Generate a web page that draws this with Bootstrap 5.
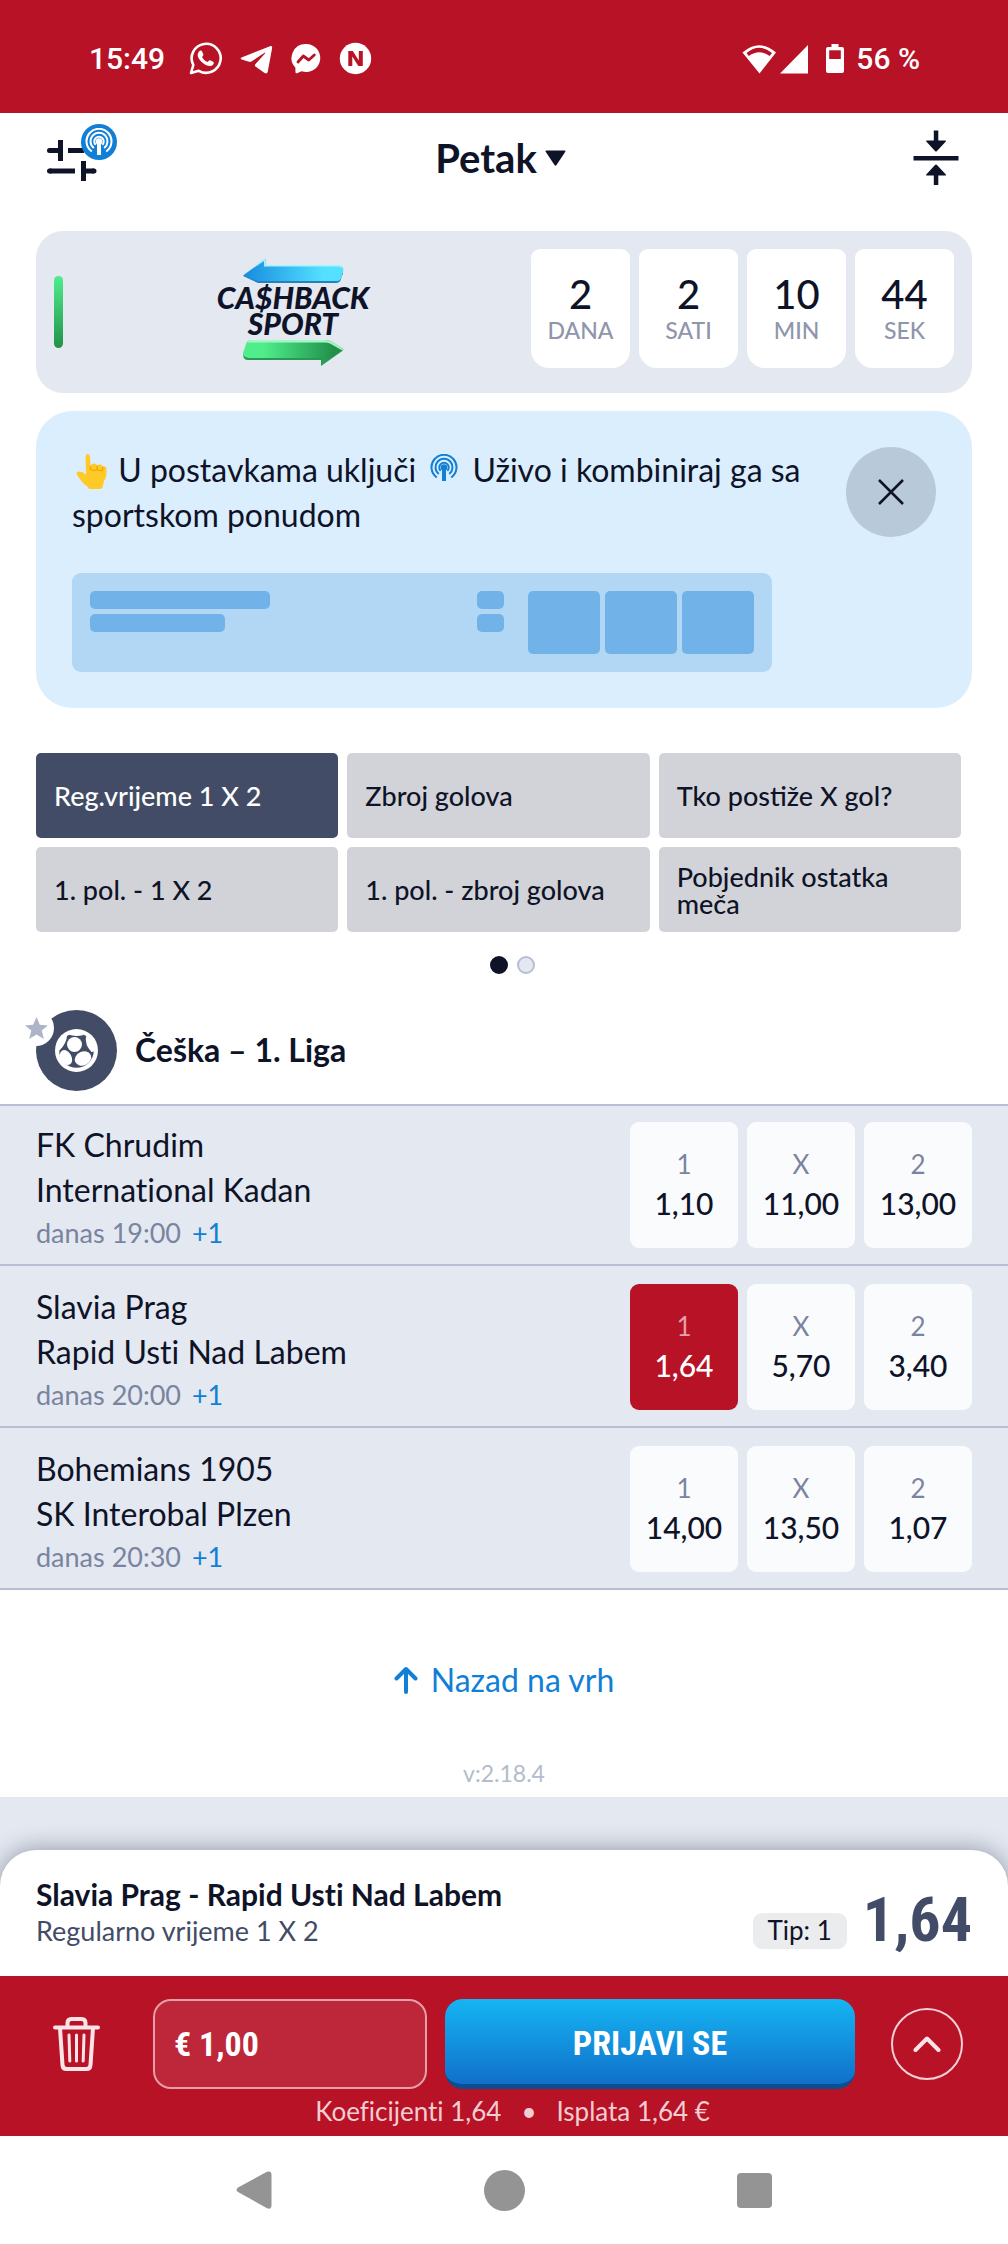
<!DOCTYPE html>
<html lang="hr">
<head>
<meta charset="utf-8">
<meta name="viewport" content="width=device-width, initial-scale=1">
<title>Petak – sportska ponuda</title>
<link href="https://cdn.jsdelivr.net/npm/bootstrap@5.3.0/dist/css/bootstrap.min.css" rel="stylesheet">
<style>
:root{--ink:#0f1328;--red:#b81226;--mist:#e3e8f1;--slate:#434c66;--muted:#7a84a0;--sky:#127fd6;--rule:#b7bed3}
body{font-family:Lato,"Open Sans",sans-serif;color:var(--ink);background:#fff;font-size:32px;line-height:45px;font-variant-ligatures:none}
svg{display:block;flex:none}
button{color:inherit}
.px-edge{padding-left:36px;padding-right:36px}
.size-xl{font-size:40px;line-height:46px}
.size-sm{font-size:27px;line-height:27px}
.size-xs{font-size:23px;line-height:26px}
.narrow{font-family:"Liberation Sans Narrow","Roboto Condensed",Roboto,sans-serif;font-weight:700}
.bare{background:none;border:0;padding:0}

.statusbar{background:var(--red);color:#fff;padding:36px 88px 32px 89px;font-family:Roboto,sans-serif;font-weight:500;font-size:30px}
.statusbar .apps{gap:18px;margin-left:24px}
.topbar{padding:13px 45px 41px 46px}
.topbar .side{width:54px}
.live-mark{position:absolute;top:2px;right:-13px;color:#fff}

.promo{background:var(--mist);border-radius:27px;padding:18px;min-height:162px}
.promo .accent{width:9px;height:72px;border-radius:5px;background:linear-gradient(#50ed8c,#21914a)}
.promo-logo{font-size:30px;font-weight:900;font-style:italic;line-height:26px;text-align:center}
.tick{width:99px;height:119px;background:#fff;border-radius:9px 9px 18px 18px;padding-top:22px;font-weight:500}
.tick .unit{color:#8f96ab}
.g9{gap:9px}

.hint{background:#dbeefe;border-radius:36px;padding:36px;margin-top:18px}
.hint p{margin:0;max-width:750px}
.hint p svg{display:inline-block;vertical-align:0;margin:0 6px}
.hint p .emoji{vertical-align:-8px;margin:0}
.dismiss{width:90px;height:90px}
.dismiss.rounded-circle{background:#b8c9da}
.skeleton{background:#b1d7f5;border-radius:9px;padding:18px;margin-top:36px;width:700px;max-width:100%}
.skeleton span{display:block;height:18px;background:#71b3e8;border-radius:5px}
.skeleton .w-a{width:180px}.skeleton .w-b{width:135px}.skeleton .w-c{width:27px}
.skeleton .sq{width:72px;height:63px}
.g5{gap:5px}

.markets{display:grid;grid-template-columns:repeat(3,1fr);gap:9px;padding:45px 47px 0 36px}
.markets button{border:0;border-radius:5px;background:#d2d3d9;min-height:85px;padding:15px 18px;text-align:left;font-weight:500}
.markets button.on{background:var(--slate);color:#fff}
.dots{gap:9px;padding-top:24px}
.dots span{width:18px;height:18px;border-radius:50%;background:var(--mist);border:2px solid var(--rule)}
.dots .on{background:var(--ink);border-color:var(--ink)}

.league{padding-top:36px;padding-bottom:13px;gap:18px}
.league h1{font-size:32px}
.crest{width:81px;height:81px;background:var(--slate)}
.crest .fav{position:absolute;left:-18px;top:0;width:36px;height:36px;border-radius:50%;background:#fff}
.match{background:var(--mist);border-bottom:2px solid var(--rule);padding-top:18px;padding-bottom:10px}
.match.first{border-top:2px solid var(--rule);padding-top:16px}
.when{line-height:42px;color:var(--muted)}
.when a{color:var(--sky)}
.odd{width:108px;height:126px;border:0;border-radius:9px;background:#fafbfd;padding:0 0 1px;font-weight:500;font-size:30px;line-height:42px}
.odd small{display:block;font-size:26px;line-height:36px;color:var(--muted);font-weight:400}
.odd.on{background:var(--red);color:#fff}
.odd.on small{color:#e5a0a8}

.to-top{color:var(--sky);gap:13px;padding-top:67px;padding-bottom:58px}
.version{color:#b4bbcc;padding-bottom:11px}
.slip-wrap{background:var(--mist);padding-top:53px;overflow:hidden}
.slip{background:#fff;border-radius:36px 36px 0 0;box-shadow:0 0 24px rgba(15,19,40,.4);padding-top:21px;padding-bottom:23px}
.slip-title{font-size:30px;font-weight:700;line-height:46px}
.slip-sub{color:var(--slate);line-height:28px;padding-bottom:8px}
.tip{background:#ebecee;border-radius:9px;padding:4px 15px 5px;margin-bottom:4px;font-size:26px}
.total{font-size:62px;line-height:66px;color:var(--slate)}
.paybar{background:var(--red);padding-top:23px;padding-bottom:3px;color:#fff}
.paybar .tools{padding-left:53px;padding-right:45px}
.stake{width:274px;height:90px;border:2px solid #e3a0a8;border-radius:18px;background:#be2639;color:#fff;padding:0 19px;font-size:34px;margin-left:53px}
.signin{height:90px;border:0;border-bottom:5px solid #0d4e8f;border-radius:18px;background:linear-gradient(#15b5f3,#1070ca);color:#fff;font-size:34px;padding-top:5px;margin:0 36px 0 18px}
.expand{width:72px;height:72px}
.expand.rounded-circle{border:2px solid #f4d0d4}
.recap{color:#f3cdd2;font-size:26px;line-height:44px;padding-left:17px}
.sysnav{height:108px;padding:0 236px}
</style>
</head>
<body>
<svg width="0" height="0" class="position-absolute" aria-hidden="true">
  <symbol id="live" viewBox="0 0 28 28"><g fill="none" stroke="currentColor" stroke-width="2"><path d="M6.800 23.500A12.500 12.500 0 1 1 21.200 23.500"/><path d="M8.800 20A8.500 8.500 0 1 1 19.200 20"/><path d="M10.700 16.800A4.700 4.700 0 1 1 17.300 16.800"/></g><circle cx="14" cy="13.500" r="3.200" fill="currentColor"/><path d="M12 13.500h4V27h-4z" fill="currentColor"/></symbol>
</svg>

<header>
  <div class="statusbar d-flex align-items-center justify-content-between">
    <div class="d-flex align-items-center">
      <span>15:49</span>
      <div class="apps d-flex align-items-center">
        <svg width="33" height="33" viewBox="0 0 33 33"><path d="M2 31l2.300-8A14.500 14.500 0 1 1 9.800 28.800z" fill="none" stroke="#fff" stroke-width="2.600" stroke-linejoin="round"/><path d="M10 9.500c1.300-1.400 2.600-1.200 3.100 0l1.200 2.700c.3.800-.1 1.400-1.300 2.800 1.500 2.600 3.200 4.100 5.700 5.100 1.100-1.400 1.700-2.100 2.500-1.800l3 1.500c.9.500.7 1.800 0 2.700-2.400 2.600-6.500 1.600-10-1.200-4.300-3.500-7.400-7.700-4.200-11.800z" fill="#fff"/></svg>
        <svg width="33" height="33" viewBox="0 0 33 33"><path d="M1.500 15.500L30 4.200c1.500-.5 2.400.3 2.100 2l-4.300 23.300c-.4 1.900-1.600 2.400-3.200 1.500l-9.100-6.600c-1-.8-.9-1.600 0-2.500L25 11.500c.6-.6-.1-.9-.8-.5L11.500 19.400c-.8.500-1.600.6-2.500.3l-7.300-2.300c-1.300-.5-1.300-1.300-.2-1.900z" fill="#fff"/></svg>
        <svg width="30" height="33" viewBox="1.500 0 30 33"><path d="M16.500 2A14 14 0 0 0 5.800 25.500L6 30.200c0 .9.700 1.300 1.500 1l4.600-2A14 14 0 1 0 16.500 2z" fill="#fff"/><path d="M8.500 20l5.300-6 5.500 4 5.500-5" fill="none" stroke="#b81226" stroke-width="2.800" stroke-linecap="round" stroke-linejoin="round"/></svg>
        <svg width="33" height="33" viewBox="0 0 33 33"><circle cx="16.500" cy="16.500" r="15.700" fill="#fff"/><path d="M9.300 9h4.500l6 9.500V9h4v15h-4.500l-6-9.500V24h-4z" fill="#b81226"/></svg>
      </div>
    </div>
    <div class="d-flex align-items-center">
      <svg width="68" height="30" viewBox="0 0 68 30"><path d="M.5 8.500Q17.500-6 34 8.500L17.500 29.500z" fill="#fff"/><path d="M4.500 9Q17.500-1.500 30 9l-2.300 3Q17.500 4.500 6.800 12z" fill="#b81226"/><path d="M38 29.500L66 1v28.500z" fill="#fff"/></svg>
      <svg class="ms-3" width="18" height="30" viewBox="0 0 18 30"><path d="M5.500 0h7v3H16q2 0 2 2v22q0 2-2 2H2q-2 0-2-2V5q0-2 2-2h3.500z" fill="#fff"/><path d="M3.200 6.300h11.600v8.700H3.200z" fill="#b81226"/></svg>
      <span class="ms-2 ps-1">56 %</span>
    </div>
  </div>
  <div class="topbar d-flex align-items-center justify-content-between">
    <button class="bare side position-relative" aria-label="Postavke">
      <svg width="54" height="64" viewBox="0 3 54 64" overflow="visible"><g stroke="#0f1328" stroke-width="5" fill="none"><path d="M14.500 17v21M37.500 38v20"/><path d="M3.500 27.500h11M22 27.500h16M3.500 48H29M38 48h10"/><path d="M3.500 27.500h1M3.500 48h1M47 48h1" stroke-linecap="round"/></g><circle cx="53" cy="19" r="18" fill="#127fd6"/></svg>
      <svg class="live-mark" width="28" height="28"><use href="#live"/></svg>
    </button>
    <button class="bare size-xl fw-bold d-flex align-items-center gap-2 me-2">Petak <svg width="21" height="16" viewBox="0 0 21 16"><path d="M1.500.5h18q1.500 0 .8 1.300L11.500 15q-1 1.300-2 0L.7 1.800Q0 .5 1.500.500z" fill="#0f1328"/></svg></button>
    <button class="bare side d-flex justify-content-center" aria-label="Sažmi"><svg width="46" height="56" viewBox="0 0 46 56"><path d="M.5 26h45v4.500H.500zM20.800.5h4.500v10h6.500q2 0 .8 1.300L24 21q-1 1-2 0l-8.500-9.200q-1.200-1.300.8-1.300h6.500zM20.800 55h4.500v-9.500h6.500q2 0 .8-1.300L24 35q-1-1-2 0l-8.500 9.200q-1.200 1.300.8 1.300h6.500z" fill="#0f1328"/></svg></button>
  </div>
</header>

<main>
  <section class="px-edge">
    <div class="promo d-flex justify-content-between">
      <div class="accent align-self-center"></div>
      <div class="promo-logo d-flex flex-column align-items-center align-self-center me-2">
        <svg width="101" height="26" viewBox="0 0 101 26"><defs><linearGradient id="gb"><stop stop-color="#168bde"/><stop offset=".8" stop-color="#54e1ff"/></linearGradient><linearGradient id="gg"><stop offset=".2" stop-color="#50ed8c"/><stop offset=".9" stop-color="#21914a"/></linearGradient></defs><path d="M0 18L15 25h78q4 0 5-4l2-8v4L23 18z" fill="#2481bd"/><path d="M0 17.500L22.500.5v6.500H95q5 0 5.500 5L98 20q-1 3-4 3H15z" fill="url(#gb)"/><path d="M0 17L22.500.5V7H95q4 0 5 3-2-1.500-5-1.500H21V3z" fill="#a8f4ff"/></svg>
        <span>CA$HBACK</span><span>SPORT</span>
        <svg class="mt-1" width="101" height="26" viewBox="0 0 101 26"><path d="M0 14q0 6 5 6h73v6l22-15.500L85 5z" fill="#2a9753"/><path d="M3 4Q4 0 8 0h74q4 0 7 2l11.500 7L79 24.500V18H6q-7-1-6-5z" fill="url(#gg)"/><path d="M4 2.500Q5 0 8 0h74q4 0 7 2l11.500 7-2 1L87 3.500q-2-1-5-1z" fill="#a3f7c3"/></svg>
      </div>
      <div class="d-flex g9 text-center">
        <div class="tick"><div class="size-xl">2</div><div class="unit size-xs">DANA</div></div>
        <div class="tick"><div class="size-xl">2</div><div class="unit size-xs">SATI</div></div>
        <div class="tick"><div class="size-xl">10</div><div class="unit size-xs">MIN</div></div>
        <div class="tick"><div class="size-xl">44</div><div class="unit size-xs">SEK</div></div>
      </div>
    </div>

    <div class="hint">
      <div class="d-flex justify-content-between align-items-start">
        <p><svg class="emoji" width="38" height="36" viewBox="0 0 38 36"><path d="M13.500 2.500Q13.500 0 15.700 0T18 2.500L18.500 12q1-3 4-2.500 2 .4 2.500 2 1.500-1.500 3.500-1t2.200 2Q34 11.500 34.500 15q.5 8-2.500 12l-1.500 6q-.5 2-2.500 2H18q-2 0-2.500-2.500-5-3-9-9.500Q5 20.500 4.500 19.500q0-2 2.500-2 3.500 0 7 3z" fill="#ffca28"/><path d="M18.500 12v3.500M25 12v3.500q-3 2-6.500 0M30.700 13v3q-3 1.500-5.700-.5" fill="none" stroke="#f4a800" stroke-width="1.400"/></svg> U postavkama uključi <svg width="28" height="28" color="#127fd6"><use href="#live"/></svg> Uživo i kombiniraj ga sa sportskom ponudom</p>
        <button class="dismiss bare rounded-circle d-flex align-items-center justify-content-center" aria-label="Zatvori"><svg width="26" height="26" viewBox="0 0 26 26"><path d="M1 1l24 24M25 1L1 25" stroke="#0f1328" stroke-width="2.500"/></svg></button>
      </div>
      <div class="skeleton d-flex justify-content-between">
        <div class="d-flex flex-column g5"><span class="w-a"></span><span class="w-b"></span></div>
        <div class="d-flex"><div class="d-flex flex-column g5 me-4"><span class="w-c"></span><span class="w-c"></span></div>
        <div class="d-flex g5"><span class="sq"></span><span class="sq"></span><span class="sq"></span></div></div>
      </div>
    </div>
  </section>

  <nav class="markets size-sm">
    <button class="on">Reg.vrijeme 1 X 2</button><button>Zbroj golova</button><button>Tko postiže X gol?</button>
    <button>1. pol. - 1 X 2</button><button>1. pol. - zbroj golova</button><button>Pobjednik ostatka meča</button>
  </nav>
  <div class="dots d-flex justify-content-center px-edge ms-3"><span class="on"></span><span></span></div>

  <section>
    <div class="league px-edge d-flex align-items-center">
      <div class="crest rounded-circle position-relative d-flex align-items-center justify-content-center">
        <svg width="43" height="43" viewBox="0 0 43 43"><circle cx="21.500" cy="21.500" r="21.500" fill="#fff"/><circle cx="21.500" cy="21.500" r="17.300" fill="#434c66"/><g fill="#fff"><circle cx="19.500" cy="15.500" r="7.500"/><ellipse cx="28" cy="29.500" rx="8.500" ry="6.800" transform="rotate(-25 28 29.500)"/><ellipse cx="11" cy="28.500" rx="5.500" ry="8" transform="rotate(-28 11 28.500)"/><path d="M31 7q-1.500 9 5.500 16 3.500 0 3-3Q38 10 31 7zM12 6.500Q12 14 4 22q-2-10 8-15.500zM13.500 5.500q6 2.500 15.500.5-7-4.500-15.500-.5z"/></g></svg>
        <button class="fav bare d-flex align-items-center justify-content-center" aria-label="Dodaj u favorite"><svg width="23" height="23" viewBox="0 0 23 23"><path d="M11.500 0l3.300 7.800 8.200.6-6.300 5.200 2.200 8.400-7.400-4.500L4.100 22l2.200-8.400L0 8.400l8.200-.6z" fill="#aeb4c7"/></svg></button>
      </div>
      <h1 class="m-0 fw-bold">Češka – 1. Liga</h1>
    </div>

    <div class="match first px-edge d-flex justify-content-between align-items-start">
      <div><div>FK Chrudim</div><div>International Kadan</div><div class="size-sm when">danas 19:00 <a href="#" class="text-decoration-none ms-1">+1</a></div></div>
      <div class="d-flex g9"><button class="odd"><small>1</small>1,10</button><button class="odd"><small>X</small>11,00</button><button class="odd"><small>2</small>13,00</button></div>
    </div>
    <div class="match px-edge d-flex justify-content-between align-items-start">
      <div><div>Slavia Prag</div><div>Rapid Usti Nad Labem</div><div class="size-sm when">danas 20:00 <a href="#" class="text-decoration-none ms-1">+1</a></div></div>
      <div class="d-flex g9"><button class="odd on"><small>1</small>1,64</button><button class="odd"><small>X</small>5,70</button><button class="odd"><small>2</small>3,40</button></div>
    </div>
    <div class="match px-edge d-flex justify-content-between align-items-start">
      <div><div>Bohemians 1905</div><div>SK Interobal Plzen</div><div class="size-sm when">danas 20:30 <a href="#" class="text-decoration-none ms-1">+1</a></div></div>
      <div class="d-flex g9"><button class="odd"><small>1</small>14,00</button><button class="odd"><small>X</small>13,50</button><button class="odd"><small>2</small>1,07</button></div>
    </div>
  </section>

  <a href="#" class="to-top d-flex align-items-center justify-content-center text-decoration-none"><svg width="24" height="28" viewBox="0 0 24 28"><path d="M12 26V3M2.500 12.500L12 3l9.500 9.500" fill="none" stroke="#127fd6" stroke-width="4" stroke-linecap="round" stroke-linejoin="round"/></svg>Nazad na vrh</a>
  <div class="version size-xs text-center">v:2.18.4</div>
</main>

<footer>
  <div class="slip-wrap">
    <div class="slip px-edge d-flex justify-content-between align-items-end">
      <div><div class="slip-title">Slavia Prag - Rapid Usti Nad Labem</div><div class="slip-sub size-sm">Regularno vrijeme 1 X 2</div></div>
      <div class="d-flex align-items-end gap-3"><span class="size-sm tip">Tip: 1</span><span class="total narrow">1,64</span></div>
    </div>
  </div>
  <div class="paybar">
    <div class="tools d-flex align-items-center">
      <button class="bare" aria-label="Obriši listić"><svg width="47" height="54" viewBox="0 0 47 54"><g fill="none" stroke="#fbe4e7" stroke-linecap="round" stroke-linejoin="round"><path d="M2 10.500h43M14.500 10V6q0-4 4-4h10q4 0 4 4v4M7 11l2.500 37q.3 4 4 4h20q3.700 0 4-4L40 11" stroke-width="4"/><path d="M16 18l.8 26M23.500 18v26M31 18l-.8 26" stroke-width="3"/></g></svg></button>
      <input class="stake narrow" aria-label="Ulog" value="€ 1,00">
      <button class="signin narrow flex-grow-1">PRIJAVI SE</button>
      <button class="expand bare rounded-circle d-flex align-items-center justify-content-center" aria-label="Prikaži listić"><svg width="28" height="18" viewBox="0 0 28 18"><path d="M2.500 15L14 3.500 25.500 15" fill="none" stroke="#fbe4e7" stroke-width="4" stroke-linecap="round" stroke-linejoin="round"/></svg></button>
    </div>
    <div class="size-sm recap text-center">Koeficijenti 1,64 &nbsp; • &nbsp; Isplata 1,64 €</div>
  </div>
  <div class="sysnav d-flex align-items-center justify-content-between">
    <svg width="36" height="38" viewBox="0 0 36 38"><path d="M2 16.500L31 .8q4.500-1.500 4.500 3v30.500q0 4.500-4.500 3L2 21q-3-2 0-4.500z" fill="#949494"/></svg>
    <svg width="41" height="41" viewBox="0 0 41 41"><circle cx="20.500" cy="20.500" r="20.500" fill="#949494"/></svg>
    <svg width="35" height="35" viewBox="0 0 35 35"><rect width="35" height="35" rx="4" fill="#949494"/></svg>
  </div>
</footer>
<script src="https://cdn.jsdelivr.net/npm/bootstrap@5.3.0/dist/js/bootstrap.bundle.min.js"></script>
</body>
</html>
